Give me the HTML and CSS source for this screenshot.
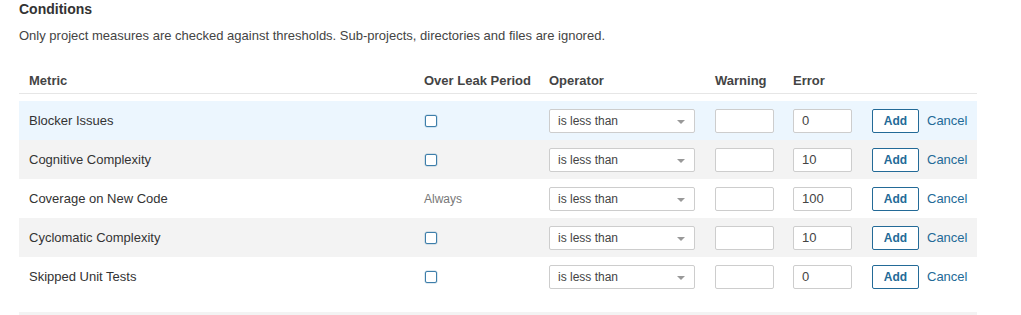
FILE: index.html
```html
<!DOCTYPE html>
<html lang="en">

<head>
    <meta charset="UTF-8">
    <meta name="viewport" content="width=device-width, initial-scale=1.0">
    <title>Quality Gate Conditions</title>
    <link rel="stylesheet" href="styles.css">
</head>

<body>
    <div class="conditions">
        <h3 class="conditions-title">Conditions</h3>
        <p class="conditions-desc">Only project measures are checked against thresholds. Sub-projects, directories and files are ignored.</p>

        <div class="conditions-table">
            <div class="cond-row cond-head">
                <div class="cell-metric">Metric</div>
                <div>Over Leak Period</div>
                <div>Operator</div>
                <div>Warning</div>
                <div>Error</div>
                <div></div>
            </div>

            <div class="cond-body">
                <div class="cond-row active">
                    <div class="cell-metric">Blocker Issues</div>
                    <div><span class="checkbox"></span></div>
                    <div><div class="select">is less than</div></div>
                    <div><div class="input"></div></div>
                    <div><div class="input">0</div></div>
                    <div class="actions"><button class="btn-add">Add</button><a class="link">Cancel</a></div>
                </div>
                <div class="cond-row odd">
                    <div class="cell-metric">Cognitive Complexity</div>
                    <div><span class="checkbox"></span></div>
                    <div><div class="select">is less than</div></div>
                    <div><div class="input"></div></div>
                    <div><div class="input">10</div></div>
                    <div class="actions"><button class="btn-add">Add</button><a class="link">Cancel</a></div>
                </div>
                <div class="cond-row">
                    <div class="cell-metric">Coverage on New Code</div>
                    <div class="note">Always</div>
                    <div><div class="select">is less than</div></div>
                    <div><div class="input"></div></div>
                    <div><div class="input">100</div></div>
                    <div class="actions"><button class="btn-add">Add</button><a class="link">Cancel</a></div>
                </div>
                <div class="cond-row odd">
                    <div class="cell-metric">Cyclomatic Complexity</div>
                    <div><span class="checkbox"></span></div>
                    <div><div class="select">is less than</div></div>
                    <div><div class="input"></div></div>
                    <div><div class="input">10</div></div>
                    <div class="actions"><button class="btn-add">Add</button><a class="link">Cancel</a></div>
                </div>
                <div class="cond-row">
                    <div class="cell-metric">Skipped Unit Tests</div>
                    <div><span class="checkbox"></span></div>
                    <div><div class="select">is less than</div></div>
                    <div><div class="input"></div></div>
                    <div><div class="input">0</div></div>
                    <div class="actions"><button class="btn-add">Add</button><a class="link">Cancel</a></div>
                </div>
            </div>
        </div>

        <div class="conditions-footer"></div>
    </div>
</body>

</html>
```

FILE: styles.css
```css
body {
    margin: 0;
    font-family: "Liberation Sans", Arial, sans-serif;
    font-size: 13px;
    color: #333;
    background: #fff;
}

.conditions {
    padding-left: 19px;
}

.conditions-title {
    margin: 0;
    font-size: 14px;
    line-height: 18px;
    font-weight: bold;
    color: #333;
}

.conditions-desc {
    margin: 9px 0 0;
    line-height: 18px;
    color: #444;
}

.conditions-table {
    width: 958px;
    margin-top: 19px;
}

.cond-row {
    display: grid;
    grid-template-columns: 405px 125px 166px 78px 79px 1fr;
    align-items: center;
    height: 39px;
}

.cond-head {
    height: auto;
    padding: 8px 0 3px;
    border-bottom: 1px solid #e6e6e6;
    font-weight: bold;
    line-height: 18px;
    color: #444;
}

.cond-body {
    margin-top: 7px;
}

.cond-row.odd {
    background-color: #f3f3f3;
}

.cond-row.active {
    background-color: #ecf6fe;
}

.cell-metric {
    padding-left: 10px;
}

.note {
    font-size: 12px;
    color: #777;
}

.checkbox {
    display: block;
    width: 10px;
    height: 10px;
    margin-left: 1px;
    border: 1px solid #3d7eaa;
    border-radius: 2px;
    background: #fff;
    box-shadow: 0 0 0 0.5px rgba(35, 106, 151, 0.3);
}

.select,
.input {
    box-sizing: border-box;
    height: 24px;
    line-height: 22px;
    padding: 0 8px;
    border: 1px solid #cdcdcd;
    border-radius: 2px;
    background: #fff;
    color: #444;
}

.select {
    position: relative;
    width: 146px;
    font-size: 12px;
}

.select::after {
    content: "";
    position: absolute;
    right: 9px;
    top: 10px;
    border-left: 4px solid transparent;
    border-right: 4px solid transparent;
    border-top: 4px solid #999;
}

.input {
    width: 59px;
}

.actions {
    display: flex;
    align-items: center;
    gap: 8px;
}

.btn-add {
    box-sizing: border-box;
    height: 24px;
    width: 47px;
    padding: 0;
    border: 1px solid #236a97;
    border-radius: 2px;
    background: #fff;
    color: #236a97;
    font-family: inherit;
    font-size: 12px;
    font-weight: bold;
}

.link {
    color: #236a97;
    cursor: pointer;
}

.conditions-footer {
    width: 958px;
    height: 10px;
    margin-top: 16px;
    background-color: #f3f3f3;
}
```
